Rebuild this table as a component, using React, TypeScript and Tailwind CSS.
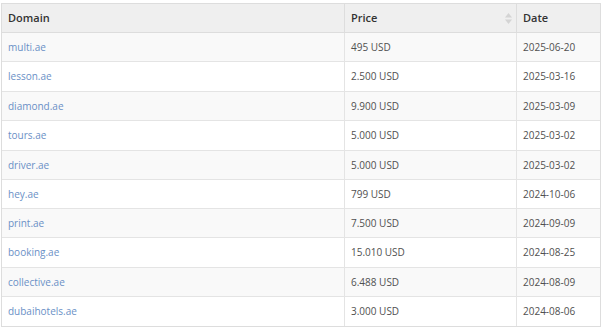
import React from "react";

const rows = [
  { d: "multi.ae", p: "495 USD", t: "2025-06-20", h: "h-[29px]" },
  { d: "lesson.ae", p: "2.500 USD", t: "2025-03-16", h: "h-[30px]" },
  { d: "diamond.ae", p: "9.900 USD", t: "2025-03-09", h: "h-[29px]" },
  { d: "tours.ae", p: "5.000 USD", t: "2025-03-02", h: "h-[30px]" },
  { d: "driver.ae", p: "5.000 USD", t: "2025-03-02", h: "h-[29px]" },
  { d: "hey.ae", p: "799 USD", t: "2024-10-06", h: "h-[29px]" },
  { d: "print.ae", p: "7.500 USD", t: "2024-09-09", h: "h-[29px]" },
  { d: "booking.ae", p: "15.010 USD", t: "2024-08-25", h: "h-[30px]" },
  { d: "collective.ae", p: "6.488 USD", t: "2024-08-09", h: "h-[29px]" },
  { d: "dubaihotels.ae", p: "3.000 USD", t: "2024-08-06", h: "h-[29px]" },
];

export default function App() {
  return (
    <div className="w-[602px] h-[328px] bg-white pt-[3px] pl-[1px]" style={{ fontFamily: '"Open Sans", sans-serif' }}>
      <div className="w-[600px] border border-[#dddddd] text-[10px] text-[#505050]">
        <div className="grid grid-cols-[342px_172px_84px] h-[29px] bg-[#efefef] border-b border-[#dddddd] font-semibold text-[11px] text-[#333333]">
          <div className="flex items-center px-[6px]">Domain</div>
          <div className="flex items-center justify-between pl-[6px] pr-[4px] border-l border-[#dddddd]">
            <span>Price</span>
            <svg width="7" height="11" viewBox="0 0 7 11">
              <path d="M3.5 0 L7 4.5 L0 4.5 Z" fill="#d4d4d4" />
              <path d="M3.5 11 L7 6.5 L0 6.5 Z" fill="#d4d4d4" />
            </svg>
          </div>
          <div className="flex items-center px-[6px] border-l border-[#dddddd]">Date</div>
        </div>
        {rows.map((r, i) => (
          <div
            key={r.d}
            className={`grid grid-cols-[342px_172px_84px] ${r.h} ${i < rows.length - 1 ? "border-b" : ""} border-[#e4e4e4] ${i % 2 === 0 ? "bg-[#f9f9f9]" : "bg-white"}`}
          >
            <div className="flex items-center px-[6px] text-[#6a90c6]">{r.d}</div>
            <div className="flex items-center px-[6px] border-l border-[#e4e4e4]">{r.p}</div>
            <div className="flex items-center px-[6px] border-l border-[#e4e4e4]">{r.t}</div>
          </div>
        ))}
      </div>
    </div>
  );
}
